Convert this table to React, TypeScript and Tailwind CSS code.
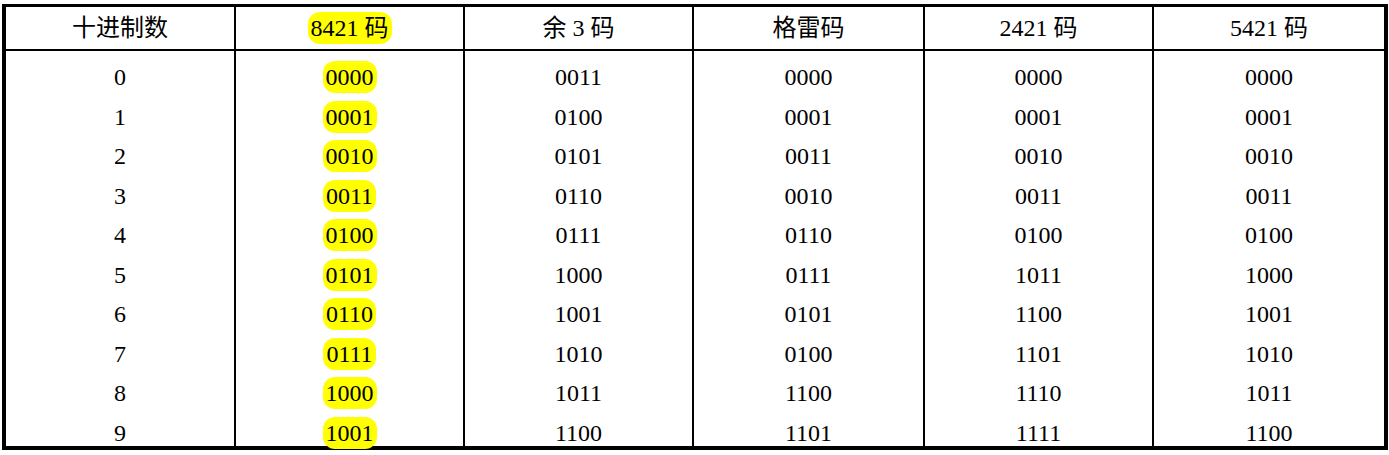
import React from "react";

const headers = ["十进制数", "8421 码", "余 3 码", "格雷码", "2421 码", "5421 码"];

const rows: string[][] = [
  ["0", "0000", "0011", "0000", "0000", "0000"],
  ["1", "0001", "0100", "0001", "0001", "0001"],
  ["2", "0010", "0101", "0011", "0010", "0010"],
  ["3", "0011", "0110", "0010", "0011", "0011"],
  ["4", "0100", "0111", "0110", "0100", "0100"],
  ["5", "0101", "1000", "0111", "1011", "1000"],
  ["6", "0110", "1001", "0101", "1100", "1001"],
  ["7", "0111", "1010", "0100", "1101", "1010"],
  ["8", "1000", "1011", "1100", "1110", "1011"],
  ["9", "1001", "1100", "1101", "1111", "1100"],
];

const cols = "grid grid-cols-[228px_229px_229px_231px_229px_232px]";

const Mark = ({ children }: { children: React.ReactNode }) => (
  <span className="bg-[#ffff00] rounded-[12px] px-[3px] py-[4px]">{children}</span>
);

export default function App() {
  return (
    <div className="bg-white w-[1389px] h-[455px] pt-[4px] pl-[2px] text-black font-['Liberation_Serif','Noto_Sans_CJK_SC',serif]">
      <div className="w-[1386px] border-black border-x-4 border-t-[3px] border-b-4 text-[24px] leading-none">
        <div className={`${cols} h-[44px] border-b-2 border-black`}>
          {headers.map((h, i) => (
            <div
              key={h}
              className={`flex items-center justify-center pb-[1px] ${i > 0 ? "border-l-2 border-black" : ""}`}
            >
              {i === 1 ? <Mark>{h}</Mark> : h}
            </div>
          ))}
        </div>
        {rows.map((r, ri) => (
          <div key={ri} className={`${cols} h-[39.5px]`}>
            {r.map((c, i) => (
              <div
                key={i}
                className={`flex items-center justify-center pt-[10px] ${i > 0 ? "border-l-2 border-black" : ""}`}
              >
                {i === 1 ? <Mark>{c}</Mark> : c}
              </div>
            ))}
          </div>
        ))}
      </div>
    </div>
  );
}
